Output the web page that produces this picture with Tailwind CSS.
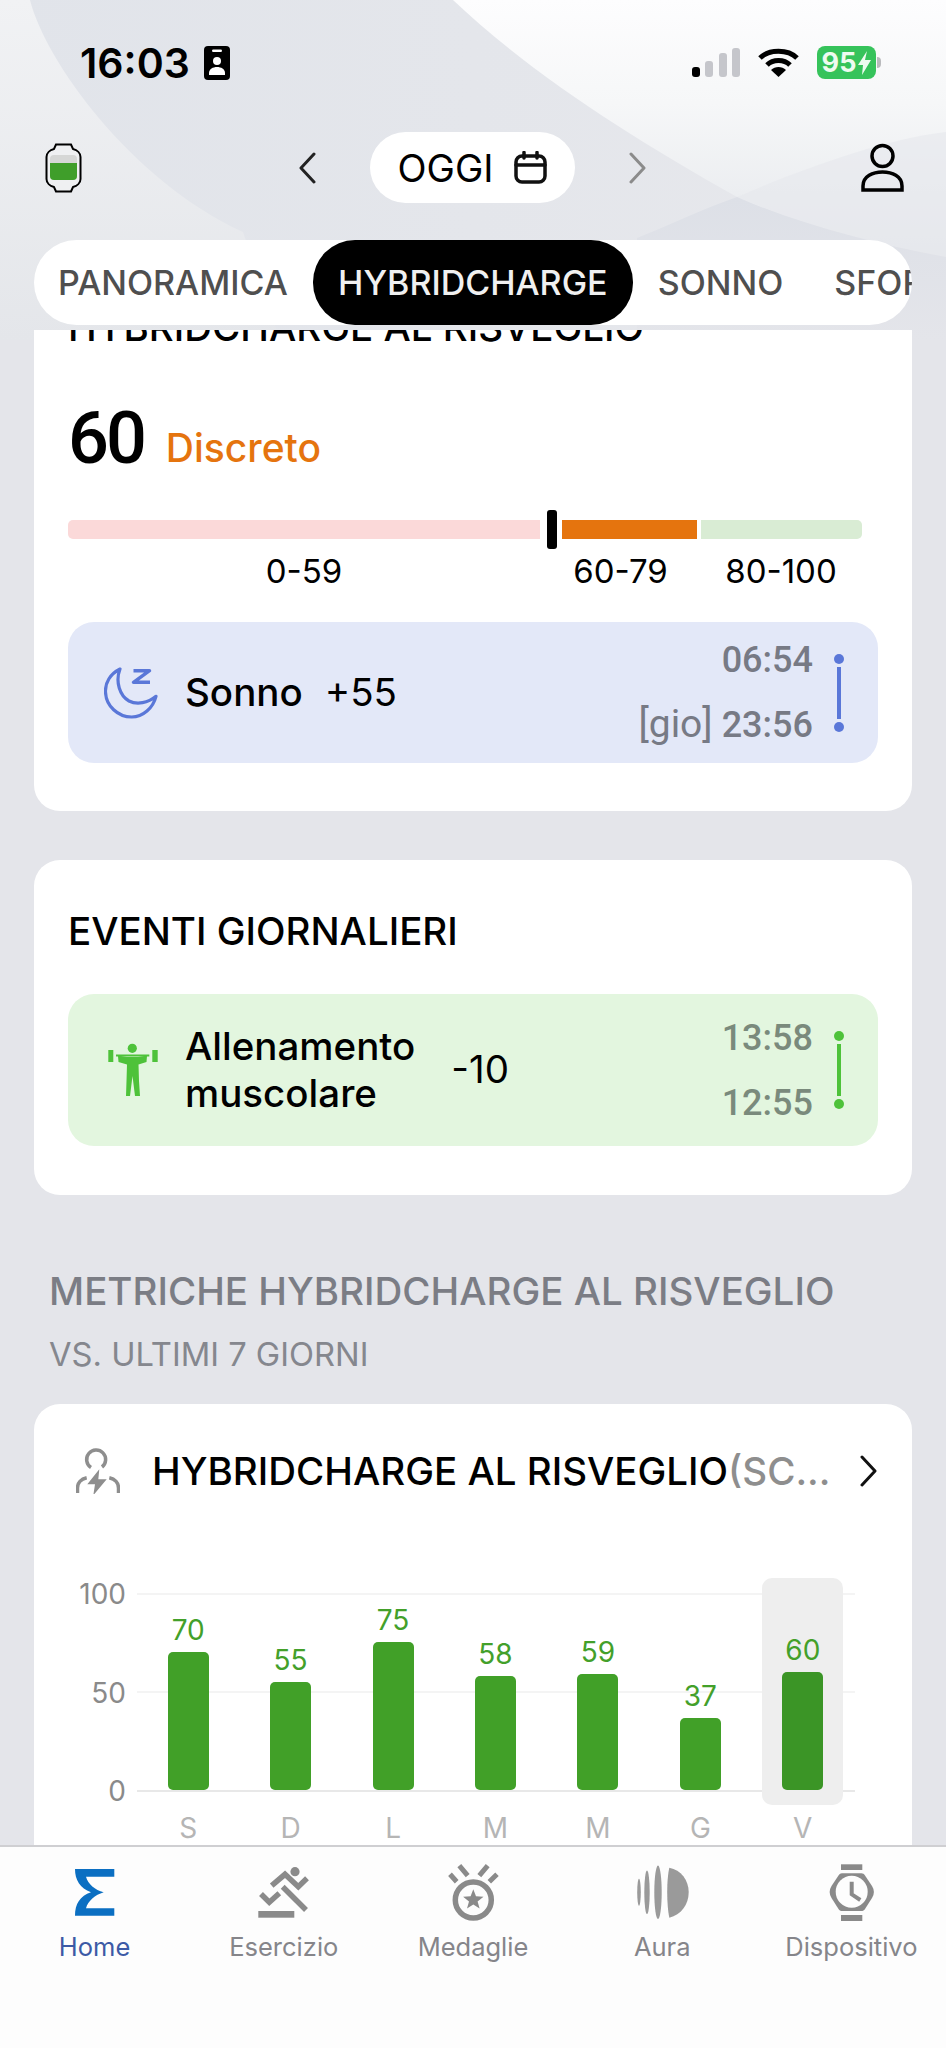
<!DOCTYPE html>
<html lang="it">
<head>
    <meta charset="UTF-8">
    <meta name="viewport" content="width=device-width, initial-scale=1.0">
    <title>HybridCharge</title>
    <script src="https://cdn.jsdelivr.net/npm/@tailwindcss/browser@4"></script>
</head>
<body class="bg-[#e4e5ea]">
    <div class="relative w-[946px] h-[2048px] overflow-hidden flex flex-col bg-[#e4e5ea] [font-family:Inter,sans-serif] text-black">

        <!-- background shapes behind the header -->
        <svg class="absolute top-0 left-0" width="946" height="340" viewBox="0 0 946 340">
            <defs>
                <linearGradient id="inner" x1="0" y1="0" x2="1" y2="0">
                    <stop offset="0" stop-color="#e1e4ea"/>
                    <stop offset="1" stop-color="#e7e8ec"/>
                </linearGradient>
                <linearGradient id="side" x1="0" y1="0" x2="0" y2="1">
                    <stop offset="0" stop-color="#f1f2f4"/>
                    <stop offset="1" stop-color="#e4e6ea"/>
                </linearGradient>
                <linearGradient id="fade" x1="0" y1="0" x2="0" y2="1">
                    <stop offset="0" stop-color="#fdfdfe"/>
                    <stop offset="0.4" stop-color="#f6f7f8"/>
                    <stop offset="0.75" stop-color="#eceef1"/>
                    <stop offset="1" stop-color="#e6e8ec"/>
                </linearGradient>
                <linearGradient id="low" x1="0" y1="0" x2="0" y2="1">
                    <stop offset="0" stop-color="#dde0e7"/>
                    <stop offset="1" stop-color="#e4e5ea"/>
                </linearGradient>
            </defs>
            <rect width="946" height="340" fill="url(#inner)"/>
            <path d="M0 0H30C45 60 130 180 243 232L280 340H0Z" fill="url(#side)"/>
            <path d="M453 0C530 73 630 137 737 197C800 225 880 245 946 257V0Z" fill="url(#fade)"/>
            <path d="M737 197C800 170 880 140 946 132V257C880 245 800 225 737 197Z" fill="#e6e8ec" fill-opacity="0.6"/>
            <path d="M637 238C670 225 700 210 737 197C800 225 880 245 946 257V340H637Z" fill="url(#low)"/>
        </svg>

        <!-- status bar -->
        <div class="relative flex items-start justify-between h-[132px] pt-[43px] pl-[80px] pr-[65px]">
            <div class="flex items-center gap-[14px]">
                <span class="text-[41px] leading-[40px] font-semibold">16:03</span>
                <svg width="26" height="34" viewBox="0 0 26 34">
                    <rect width="26" height="34" rx="4" fill="#000"/>
                    <rect x="8" y="3.5" width="10" height="2.5" rx="1.2" fill="#fff"/>
                    <circle cx="13" cy="15" r="4" fill="#fff"/>
                    <path d="M5 29V27C5 23 9 21 13 21S21 23 21 27V29Z" fill="#fff"/>
                </svg>
            </div>
            <div class="flex items-center gap-[18px] pt-[3px]">
                <div class="flex items-end gap-[5.5px] h-[29px]">
                    <div class="w-[8px] h-[10px] rounded-[3px] bg-black"></div>
                    <div class="w-[8px] h-[16px] rounded-[3px] bg-[#c5c6cb]"></div>
                    <div class="w-[8px] h-[24px] rounded-[3px] bg-[#c5c6cb]"></div>
                    <div class="w-[8px] h-[29px] rounded-[3px] bg-[#c5c6cb]"></div>
                </div>
                <svg width="41" height="29" viewBox="0 0 41 29" fill="none" stroke="#000" stroke-width="5">
                    <path d="M2 10C11 1 30 1 39 10"/>
                    <path d="M9 17C15 11 26 11 32 17"/>
                    <path d="M20.5 29L13 22C17 18 24 18 28 22Z" fill="#000" stroke="none"/>
                </svg>
                <div class="flex items-center">
                    <div class="flex items-center justify-center gap-[2px] w-[59px] h-[33px] rounded-[8px] bg-[#36c35b] text-[#eefbf0] text-[27px] font-bold leading-none">95<svg width="13" height="24" viewBox="0 0 13 24"><path d="M9 0L0 14H5L4 24L13 9H7Z" fill="#eefbf0"/></svg></div>
                    <div class="w-[4px] h-[11px] ml-[1px] rounded-r-full bg-[#b9babd]"></div>
                </div>
            </div>
        </div>

        <!-- date header -->
        <div class="relative flex items-center h-[71px] pl-[45px] pr-[42px]">
            <svg width="37" height="50" viewBox="0 0 37 50" fill="none">
                <path d="M11 1.5H26L28 6C32 7 35.5 10 35.5 14V36C35.5 40 32 43 28 44L26 48.5H11L9 44C5 43 1.5 40 1.5 36V14C1.5 10 5 7 9 6Z" fill="#eff0f2" stroke="#000" stroke-width="2"/>
                <rect x="5" y="12" width="27" height="25" rx="4" fill="#d6d7d6"/>
                <path d="M5 20H32V33A4 4 0 0 1 28 37H9A4 4 0 0 1 5 33Z" fill="#3f9e2a"/>
            </svg>
            <svg class="ml-[216px]" width="18" height="32" viewBox="0 0 18 32" fill="none" stroke="#222" stroke-width="3" stroke-linecap="round" stroke-linejoin="round"><path d="M16 2L3 16L16 30"/></svg>
            <div class="flex items-center justify-center gap-[21px] w-[205px] h-[71px] ml-[54px] rounded-full bg-white">
                <span class="text-[38px] leading-none">OGGI</span>
                <svg width="33" height="33" viewBox="0 0 33 33" fill="none" stroke="#111" stroke-width="3.5" stroke-linecap="round"><rect x="2" y="5" width="29" height="26" rx="6"/><path d="M2 14H31M10 1.5V7M23 1.5V7"/></svg>
            </div>
            <svg class="ml-[54px]" width="18" height="32" viewBox="0 0 18 32" fill="none" stroke="#8b8b8b" stroke-width="3" stroke-linecap="round" stroke-linejoin="round"><path d="M2 2L15 16L2 30"/></svg>
            <svg class="ml-auto" width="43" height="50" viewBox="0 0 43 50" fill="none" stroke="#000" stroke-width="3.5"><circle cx="21.5" cy="13" r="10.5"/><path d="M2 47V43C2 33 12 29 21.5 29S41 33 41 43V47H2Z"/></svg>
        </div>

        <!-- tabs -->
        <div class="relative flex items-center h-[85px] mt-[37px] mx-[34px] w-[878px] rounded-full bg-white overflow-hidden text-[34px] font-medium text-[#4f4f4f] whitespace-nowrap">
            <span class="ml-[24px]">PANORAMICA</span>
            <span class="flex items-center justify-center shrink-0 w-[320px] h-[85px] ml-[25px] rounded-[42px] bg-black text-[#f0f0f0]">HYBRIDCHARGE</span>
            <span class="ml-[25px]">SONNO</span>
            <span class="ml-[51px]">SFORZO</span>
        </div>

        <!-- scrolling content -->
        <div class="relative flex-1 mt-[5px] overflow-hidden">
            <div class="-mt-[32px] px-[34px]">

                <div class="h-[513px] rounded-[26px] bg-white px-[34px] pt-[6px]">
                    <h2 class="text-[38.5px] leading-[47px] font-medium whitespace-nowrap">HYBRIDCHARGE AL RISVEGLIO</h2>
                    <div class="flex items-end gap-[22px] mt-[48px] h-[80px]">
                        <span class="[font-family:Roboto,sans-serif] text-[72px] leading-[80px] font-medium tracking-[-3px]">60</span>
                        <span class="text-[39px] leading-[62px] font-medium text-[#e5740e]">Discreto</span>
                    </div>
                    <div class="relative flex items-center h-[39px] mt-[31px] w-[794px]">
                        <div class="w-[472px] h-[19px] rounded-l-[5px] bg-[#fbd9d9]"></div>
                        <div class="w-[10px] h-[39px] ml-[7px] rounded-[3px] bg-black"></div>
                        <div class="w-[135px] h-[19px] ml-[5px] bg-[#e5740e]"></div>
                        <div class="w-[161px] h-[19px] ml-[4px] rounded-r-[5px] bg-[#d9ecd4]"></div>
                    </div>
                    <div class="flex text-[33px] leading-[44px] w-[794px] text-center">
                        <span class="w-[472px]">0-59</span>
                        <span class="w-[161px]">60-79</span>
                        <span class="w-[160px]">80-100</span>
                    </div>
                    <div class="flex items-center h-[141px] mt-[29px] w-[810px] rounded-[26px] bg-[#e3e8f8] pl-[36px]">
                        <svg width="54" height="54" viewBox="0 0 54 54" fill="none" stroke="#5a77d8" stroke-width="3.2" stroke-linecap="round" stroke-linejoin="round">
                            <path d="M16 3C6 8 1 17 1.5 26C2 40 14 51 27.7 51C39 51 49 42 52 30.3C44 37 33 39 25 35C16 30 11 16 16 3Z"/>
                            <path d="M29.5 4.7H45.5L29.5 16.3H46" stroke-width="3.5" stroke-linecap="butt"/>
                        </svg>
                        <span class="ml-[27px] text-[38.5px] font-medium">Sonno</span>
                        <span class="ml-[22px] text-[38.5px]">+55</span>
                        <div class="ml-auto flex flex-col items-end gap-[14px] [font-family:Roboto,sans-serif] text-[36px] leading-[50px] font-medium text-[#777a85]">
                            <span>06:54</span>
                            <span><span class="text-[39px] font-normal">[gio]</span> 23:56</span>
                        </div>
                        <div class="flex flex-col items-center w-[10px] h-[78px] ml-[21px] mr-[34px]">
                            <div class="w-[10px] h-[10px] rounded-full bg-[#5a77d8]"></div>
                            <div class="w-[4px] flex-1 my-[3px] bg-[#5a77d8]"></div>
                            <div class="w-[10px] h-[10px] rounded-full bg-[#5a77d8]"></div>
                        </div>
                    </div>
                </div>

                <div class="h-[335px] mt-[49px] rounded-[26px] bg-white px-[34px] pt-[48px]">
                    <h2 class="text-[38.5px] leading-[47px] font-medium">EVENTI GIORNALIERI</h2>
                    <div class="flex items-center h-[152px] mt-[39px] w-[810px] rounded-[26px] bg-[#e3f6df] pl-[39px]">
                        <svg width="51" height="54" viewBox="0 0 51 54" fill="#4ec23a">
                            <rect x="1.3" y="7" width="5" height="12"/><rect x="45.3" y="7" width="5.4" height="12"/>
                            <circle cx="25.3" cy="5.3" r="4.6"/>
                            <rect x="9" y="11.5" width="33.3" height="2"/>
                            <path d="M11 13L14 13L20 14H31L37 13H40L39.5 19L31.5 21.5L32 38L33 53H28L25.5 33L23 53H19L19.5 38L20 21.5L11.5 19Z"/>
                        </svg>
                        <div class="ml-[27px] text-[38.5px] leading-[47px] font-medium">Allenamento<br>muscolare</div>
                        <span class="ml-[36px] text-[38.5px]">-10</span>
                        <div class="ml-auto flex flex-col items-end gap-[15px] [font-family:Roboto,sans-serif] text-[36px] leading-[50px] font-medium text-[#7a8a7c]">
                            <span>13:58</span>
                            <span>12:55</span>
                        </div>
                        <div class="flex flex-col items-center w-[10px] h-[78px] ml-[21px] mr-[34px]">
                            <div class="w-[10px] h-[10px] rounded-full bg-[#4ec23a]"></div>
                            <div class="w-[4px] flex-1 my-[3px] bg-[#4ec23a]"></div>
                            <div class="w-[10px] h-[10px] rounded-full bg-[#4ec23a]"></div>
                        </div>
                    </div>
                </div>

                <h2 class="mt-[71px] ml-[15px] text-[38.5px] leading-[50px] font-medium text-[#7b7d85] whitespace-nowrap">METRICHE HYBRIDCHARGE AL RISVEGLIO</h2>
                <p class="mt-[18px] ml-[15px] text-[32.7px] leading-[40px] text-[#85878e]">VS. ULTIMI 7 GIORNI</p>

                <div class="h-[500px] mt-[30px] rounded-t-[26px] bg-white pl-[42px] pr-[34px] pt-[43px]">
                    <div class="flex items-center h-[48px]">
                        <svg width="44" height="46" viewBox="0 0 44 46" fill="none" stroke="#8e8e8e" stroke-width="3.5">
                            <path d="M15 19.5A9.5 9.5 0 1 1 26 19"/>
                            <path d="M1.5 45V40C1.5 35 5 31 10.7 29.7M42.5 45V40C42.5 35 39 31 33.3 29.7"/>
                            <path d="M23.3 21.3L11.3 36.3H19L17.3 47.3L30.7 31.3H22.3Z" fill="#8e8e8e" stroke="none"/>
                        </svg>
                        <div class="ml-[32px] w-[678px] text-[38.5px] leading-[48px] font-medium whitespace-nowrap overflow-hidden">HYBRIDCHARGE AL RISVEGLIO<span class="text-[#8e8e8e]">(SC...</span></div>
                        <svg class="ml-[30px]" width="18" height="32" viewBox="0 0 18 32" fill="none" stroke="#111" stroke-width="3" stroke-linecap="round" stroke-linejoin="round"><path d="M2 2L15 16L2 30"/></svg>
                    </div>

                    <!-- chart -->
                    <div class="relative flex mt-[98px] h-[250px] text-[28px] leading-[32px]">
                        <div class="absolute left-[61px] right-[23px] top-[0px] h-[2px] bg-[#f4f4f4]"></div>
                        <div class="absolute left-[61px] right-[23px] top-[98px] h-[2px] bg-[#f4f4f4]"></div>
                        <div class="absolute left-[61px] right-[23px] top-[197px] h-[2px] bg-[#e8e8e8]"></div>
                        <div class="absolute left-[686px] top-[-15px] w-[81px] h-[227px] rounded-[10px] bg-[#eeeeee]"></div>
                        <div class="flex flex-col justify-between items-end w-[50px] h-[229px] -mt-[15px] text-[#8a8a8a]">
                            <span>100</span><span>50</span><span>0</span>
                        </div>
                        <div class="relative grid grid-cols-7 w-[717px] ml-[11px] text-center">
                            <div class="flex flex-col items-center"><div class="flex flex-col justify-end items-center h-[197px] gap-[6px]"><span class="text-[#43a02a]">70</span><div class="w-[41px] h-[138px] rounded-[5px] bg-[#41a028]"></div></div><span class="mt-[22px] text-[#b5b5b5]">S</span></div>
                            <div class="flex flex-col items-center"><div class="flex flex-col justify-end items-center h-[197px] gap-[6px]"><span class="text-[#43a02a]">55</span><div class="w-[41px] h-[108px] rounded-[5px] bg-[#41a028]"></div></div><span class="mt-[22px] text-[#b5b5b5]">D</span></div>
                            <div class="flex flex-col items-center"><div class="flex flex-col justify-end items-center h-[197px] gap-[6px]"><span class="text-[#43a02a]">75</span><div class="w-[41px] h-[148px] rounded-[5px] bg-[#41a028]"></div></div><span class="mt-[22px] text-[#b5b5b5]">L</span></div>
                            <div class="flex flex-col items-center"><div class="flex flex-col justify-end items-center h-[197px] gap-[6px]"><span class="text-[#43a02a]">58</span><div class="w-[41px] h-[114px] rounded-[5px] bg-[#41a028]"></div></div><span class="mt-[22px] text-[#b5b5b5]">M</span></div>
                            <div class="flex flex-col items-center"><div class="flex flex-col justify-end items-center h-[197px] gap-[6px]"><span class="text-[#43a02a]">59</span><div class="w-[41px] h-[116px] rounded-[5px] bg-[#41a028]"></div></div><span class="mt-[22px] text-[#b5b5b5]">M</span></div>
                            <div class="flex flex-col items-center"><div class="flex flex-col justify-end items-center h-[197px] gap-[6px]"><span class="text-[#43a02a]">37</span><div class="w-[41px] h-[72px] rounded-[5px] bg-[#41a028]"></div></div><span class="mt-[22px] text-[#b5b5b5]">G</span></div>
                            <div class="flex flex-col items-center"><div class="flex flex-col justify-end items-center h-[197px] gap-[6px]"><span class="text-[#43a02a]">60</span><div class="w-[41px] h-[118px] rounded-[5px] bg-[#3b9526]"></div></div><span class="mt-[22px] text-[#b5b5b5]">V</span></div>
                        </div>
                    </div>
                </div>
            </div>
        </div>

        <!-- bottom nav -->
        <nav class="relative grid grid-cols-5 h-[203px] border-t-2 border-[#cfcfd2] bg-[#fdfdfd] text-[25.5px] leading-[32px] text-[#85858a] text-center pt-[17px]">
            <div class="flex flex-col items-center gap-[9px]">
                <svg width="58" height="58" viewBox="0 0 58 58" fill="#0b6fc2"><path d="M9 5H48.3V12.7H20C22 20 29 26 37.7 28.3C29 31 22 37 20 44.3H48.3V51.7H9C9 40 14 32 25 28.3C14 24 9 16 9 5Z"/></svg>
                <span class="text-[#3c5aa6]">Home</span>
            </div>
            <div class="flex flex-col items-center gap-[9px]">
                <svg width="58" height="58" viewBox="0 0 58 58" fill="none" stroke="#8a8a8a" stroke-width="5.5"><circle cx="40" cy="7.7" r="4.6" fill="#8a8a8a" stroke="none"/><path d="M16.7 21.7L30 10.3L43.3 22.7L52 14.3"/><path d="M27.7 22.7L51 46"/><path d="M6 30L14.3 38.3L24.3 29.3"/><rect x="3.3" y="47" width="36" height="6.7" fill="#8a8a8a" stroke="none"/></svg>
                <span>Esercizio</span>
            </div>
            <div class="flex flex-col items-center gap-[9px]">
                <svg width="58" height="58" viewBox="0 0 58 58" fill="none" stroke="#8a8a8a"><path d="M6 10.3L12.7 17.7M15.3 1.7L23.7 11.7M43.7 1.7L35.3 11.7M53 10.3L45.3 17.7" stroke-width="5"/><circle cx="29.3" cy="36" r="18" stroke-width="5.5"/><path d="M29.3 25.3L32 32.3L39.5 32.7L33.6 37.4L35.6 44.6L29.3 40.5L23 44.6L25 37.4L19.1 32.7L26.6 32.3Z" fill="#8a8a8a" stroke="none"/></svg>
                <span>Medaglie</span>
            </div>
            <div class="flex flex-col items-center gap-[9px]">
                <svg width="58" height="58" viewBox="0 0 58 58" fill="#9a9a9a"><ellipse cx="6" cy="28.3" rx="1.8" ry="13.5"/><ellipse cx="14" cy="28.3" rx="2.7" ry="21.7"/><ellipse cx="25" cy="28.3" rx="3.7" ry="26.7"/><path d="M36.3 3.7C48 6 55.7 16 55.7 28.3S48 51 36.3 53.7C33.5 40 33.5 16 36.3 3.7Z"/></svg>
                <span>Aura</span>
            </div>
            <div class="flex flex-col items-center gap-[9px]">
                <svg width="58" height="58" viewBox="0 0 58 58" fill="none" stroke="#8a8a8a"><rect x="19" y="0.3" width="21.3" height="5.7" fill="#8a8a8a" stroke="none"/><rect x="19" y="51" width="21.3" height="6" fill="#8a8a8a" stroke="none"/><path d="M20 9.3H39.3C41 9.3 42 10 43 11.5L50 22C52.5 26 52.5 30 50 34L43 45C42 46.5 41 47 39.3 47H20C18.5 47 17.5 46.5 16.5 45L9.5 34C7 30 7 26 9.5 22L16.5 11.5C17.5 10 18.5 9.3 20 9.3Z" fill="#8a8a8a" stroke="none"/><circle cx="29.7" cy="27.7" r="16" fill="#fdfdfd" stroke="none"/><path d="M29.7 17.7V30.3L38.3 36" stroke-width="4"/></svg>
                <span>Dispositivo</span>
            </div>
        </nav>
    </div>
</body>
</html>
